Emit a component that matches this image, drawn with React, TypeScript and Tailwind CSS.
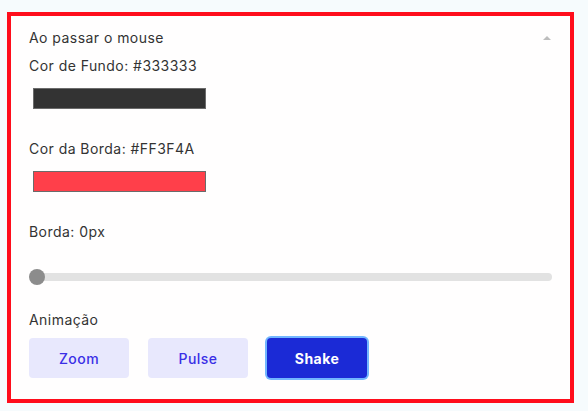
export default function App() {
  const buttons = ["Zoom", "Pulse", "Shake"];
  const active = "Shake";

  return (
    <div className="min-h-screen bg-[#f6fbfd] pl-[7px] pt-[12px] font-['Inter',sans-serif] text-[14px] tracking-[0.45px] text-[#333333]">
      <div className="flex h-[391px] w-[567px] flex-col border-4 border-[#ff0d1c] bg-[#fffefe] px-[18px]">
        {/* header */}
        <div className="mt-[12px] flex h-[20px] items-center justify-between leading-[20px]">
          <span>Ao passar o mouse</span>
          <span className="mr-[1px] h-0 w-0 border-x-[4px] border-b-[4px] border-x-transparent border-b-[#bdbdbd]" />
        </div>

        {/* background colour */}
        <div className="mt-[8px] h-[20px] leading-[20px]">Cor de Fundo: #333333</div>
        <div className="ml-[4px] mt-[12px] h-[21px] w-[173px] border border-[#6b6b6b] bg-[#333333]" />

        {/* border colour */}
        <div className="mt-[30px] h-[20px] leading-[20px]">Cor da Borda: #FF3F4A</div>
        <div className="ml-[4px] mt-[12px] h-[21px] w-[173px] border border-[#6b6b6b] bg-[#ff3f4a]" />

        {/* border width */}
        <div className="mt-[30px] h-[20px] leading-[20px]">Borda: 0px</div>
        <div className="relative mt-[27px] flex h-[16px] items-center">
          <div className="ml-[1px] h-[8px] w-[522px] rounded-full bg-[#e2e2e2]" />
          <div className="absolute left-0 top-0 h-[16px] w-[16px] rounded-full bg-[#8c8c8c]" />
        </div>

        {/* animation */}
        <div className="mt-[25px] h-[20px] leading-[20px]">Animação</div>
        <div className="mt-[8px] flex gap-[19px]">
          {buttons.map((b) =>
            b === active ? (
              <button
                key={b}
                className="h-[40px] w-[100px] rounded-[4px] bg-[#1b2ad6] text-[14px] font-bold text-white ring-2 ring-[#72b6ff]"
              >
                {b}
              </button>
            ) : (
              <button
                key={b}
                className="h-[40px] w-[100px] rounded-[4px] bg-[#e8e8fd] text-[14px] font-medium text-[#3a2fe6]"
              >
                {b}
              </button>
            )
          )}
        </div>
      </div>
    </div>
  );
}
